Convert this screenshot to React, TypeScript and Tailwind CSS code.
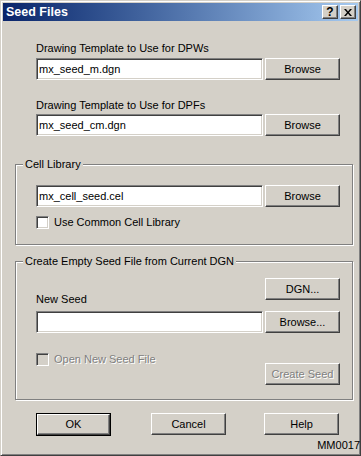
import React from 'react';

const face = 'bg-[#d4d0c8]';
const raised =
  'border border-t-white border-l-white border-r-[#404040] border-b-[#404040] shadow-[inset_-1px_-1px_0_#808080]';
const sunken =
  'border border-t-[#808080] border-l-[#808080] border-r-white border-b-white shadow-[inset_1px_1px_0_#404040,inset_-1px_-1px_0_#d4d0c8]';
const etched = 'border border-[#808080] shadow-[inset_1px_1px_0_#fff,1px_1px_0_#fff]';

function Btn({ label, disabled, isDefault }: { label: string; disabled?: boolean; isDefault?: boolean }) {
  const inner = (
    <div
      className={`${face} ${raised} w-full h-full flex items-center justify-center ${
        disabled ? 'text-[#808080] [text-shadow:1px_1px_0_#fff]' : 'text-black'
      }`}
    >
      {label}
    </div>
  );
  if (isDefault) {
    return <div className="w-[75px] h-[23px] border border-black">{inner}</div>;
  }
  return <div className="w-[75px] h-[22px]">{inner}</div>;
}

function Field({ value }: { value: string }) {
  return (
    <div className={`w-[227px] h-[22px] bg-white ${sunken} flex items-center pl-[2px] text-black`}>
      {value}
    </div>
  );
}

function Check({ label, disabled }: { label: string; disabled?: boolean }) {
  return (
    <div className="flex items-center gap-[5px] h-[13px]">
      <div className={`w-[13px] h-[13px] ${disabled ? face : 'bg-white'} ${sunken}`} />
      <span className={disabled ? 'text-[#808080] [text-shadow:1px_1px_0_#fff]' : 'text-black'}>{label}</span>
    </div>
  );
}

function Group({ title, height, children }: { title: string; height: string; children: React.ReactNode }) {
  return (
    <div className={`relative ml-[12px] w-[338px] ${height} ${etched}`}>
      <span className={`absolute -top-[7px] left-[7px] px-[2px] ${face} leading-[13px]`}>{title}</span>
      {children}
    </div>
  );
}

export default function App() {
  return (
    <div
      className={`relative w-[361px] h-[456px] ${face} border border-t-[#d4d0c8] border-l-[#d4d0c8] border-r-[#404040] border-b-[#404040] shadow-[inset_1px_1px_0_#fff,inset_-1px_-1px_0_#808080] p-[2px] text-[11px] leading-[13px] font-['Liberation_Sans',Arial,sans-serif] overflow-hidden`}
    >
      {/* barra de título */}
      <div className="h-[18px] flex items-center justify-between pl-[3px] pr-[2px] bg-gradient-to-r from-[#0a246a] to-[#a6caf0]">
        <span className="text-white font-bold text-[12.5px]">Seed Files</span>
        <div className="flex gap-[2px]">
          <div className={`${face} ${raised} w-[16px] h-[14px] flex items-center justify-center font-bold text-[12px] leading-none text-black`}>
            ?
          </div>
          <div className={`${face} ${raised} w-[16px] h-[14px] flex items-center justify-center`}>
            <svg width="8" height="7" viewBox="0 0 8 7">
              <path d="M0 0h2l2 2.5L6 0h2L5 3.5 8 7H6L4 4.5 2 7H0l3-3.5z" fill="#000" />
            </svg>
          </div>
        </div>
      </div>

      {/* plantillas */}
      <div className="pl-[33px] pt-[21px]">
        <div>Drawing Template to Use for DPWs</div>
        <div className="flex gap-[2px] mt-[3px]">
          <Field value="mx_seed_m.dgn" />
          <Btn label="Browse" />
        </div>
        <div className="mt-[19px]">Drawing Template to Use for DPFs</div>
        <div className="flex gap-[2px] mt-[2px]">
          <Field value="mx_seed_cm.dgn" />
          <Btn label="Browse" />
        </div>
      </div>

      {/* cell library */}
      <div className="mt-[28px]">
        <Group title="Cell Library" height="h-[81px]">
          <div className="pl-[20px] pt-[20px]">
            <div className="flex gap-[2px]">
              <Field value="mx_cell_seed.cel" />
              <Btn label="Browse" />
            </div>
            <div className="mt-[9px]">
              <Check label="Use Common Cell Library" />
            </div>
          </div>
        </Group>
      </div>

      {/* seed vacío */}
      <div className="mt-[16px]">
        <Group title="Create Empty Seed File from Current DGN" height="h-[139px]">
          <div className="pl-[20px] pt-[16px]">
            <div className="flex items-start gap-[2px]">
              <div className="w-[227px] mt-[15px]">New Seed</div>
              <Btn label="DGN..." />
            </div>
            <div className="flex gap-[2px] mt-[5px]">
              <Field value="" />
              <Btn label="Browse..." />
            </div>
            <div className="flex items-start gap-[2px] mt-[20px]">
              <div className="w-[227px]">
                <Check label="Open New Seed File" disabled />
              </div>
              <div className="mt-[10px]">
                <Btn label="Create Seed" disabled />
              </div>
            </div>
          </div>
        </Group>
      </div>

      {/* botones */}
      <div className="flex pl-[33px] mt-[13px]">
        <Btn label="OK" isDefault />
        <div className="ml-[40px]">
          <Btn label="Cancel" />
        </div>
        <div className="ml-[38px]">
          <Btn label="Help" />
        </div>
      </div>

      <span className="absolute right-0 top-[438px] text-black">MM0017</span>
    </div>
  );
}
